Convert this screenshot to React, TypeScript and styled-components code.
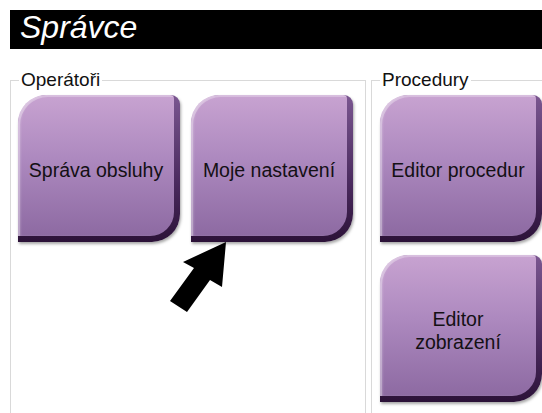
import React from "react";
import styled, { createGlobalStyle } from "styled-components";

const GlobalStyle = createGlobalStyle`
  html, body {
    margin: 0;
    padding: 0;
    background: #ffffff;
    overflow: hidden;
  }
`;

const Page = styled.div`
  position: relative;
  width: 542px;
  height: 413px;
  overflow: hidden;
  display: flex;
  flex-direction: column;
  font-family: "Liberation Sans", Arial, sans-serif;
  background: #ffffff;
`;

const Header = styled.div`
  margin: 10px 0 0 10px;
  height: 34px;
  padding: 0 0 5px 10px;
  background: #000000;
  color: #ffffff;
  font-size: 32px;
  font-style: italic;
  line-height: 34px;
`;

const Row = styled.div`
  flex: 1;
  display: flex;
  gap: 5px;
  margin: 21px 0 0 10px;
`;

const Group = styled.fieldset<{ $width: number }>`
  box-sizing: border-box;
  flex: none;
  width: ${({ $width }) => $width}px;
  margin: 0;
  padding: 5px 8px 0 8px;
  border: 1px solid #d9d9d9;
  border-bottom: none;
  min-width: 0;
`;

const Legend = styled.legend`
  padding: 0 2px;
  font-size: 19px;
  line-height: 20px;
  color: #111111;
`;

const TileRow = styled.div<{ $column?: boolean }>`
  display: flex;
  flex-direction: ${({ $column }) => ($column ? "column" : "row")};
  gap: ${({ $column }) => ($column ? "13px" : "11px")};
  margin-left: ${({ $column }) => ($column ? "0" : "-1px")};
`;

const Tile = styled.div`
  box-sizing: border-box;
  width: 162px;
  height: 147px;
  padding: 0 6px 6px 0;
  border-radius: 30px 9px 28px 0;
  background: linear-gradient(180deg, #7a5690 0%, #4a2a5e 60%, #2c1238 100%);
  box-shadow: 1px 2px 3px rgba(0, 0, 0, 0.35);
  display: flex;
`;

const Face = styled.div`
  flex: 1;
  display: flex;
  align-items: center;
  justify-content: center;
  text-align: center;
  border-radius: 28px 4px 24px 0;
  background: linear-gradient(180deg, #c8a3d1 0%, #ad89bf 45%, #8d6aa2 100%);
  box-shadow: inset 2px 2px 0 rgba(255, 255, 255, 0.28),
    inset 3px 0 2px rgba(255, 255, 255, 0.18);
  font-size: 19.5px;
  line-height: 23px;
  color: #141014;
  padding: 10px 4px 0 4px;
`;

const Arrow = styled.svg`
  position: absolute;
  left: 0;
  top: 0;
  pointer-events: none;
`;

const tiles = {
  operators: ["Správa obsluhy", "Moje nastavení"],
  procedures: ["Editor procedur", "Editor zobrazení"],
};

export default function App() {
  return (
    <>
      <GlobalStyle />
      <Page>
        <Header>Správce</Header>
        <Row>
          <Group $width={356}>
            <Legend>Operátoři</Legend>
            <TileRow>
              {tiles.operators.map((t) => (
                <Tile key={t}>
                  <Face>{t}</Face>
                </Tile>
              ))}
            </TileRow>
          </Group>
          <Group $width={190}>
            <Legend>Procedury</Legend>
            <TileRow $column>
              <Tile>
                <Face>Editor procedur</Face>
              </Tile>
              <Tile>
                <Face>
                  Editor
                  <br />
                  zobrazení
                </Face>
              </Tile>
            </TileRow>
          </Group>
        </Row>
        <Arrow width="542" height="413" viewBox="0 0 542 413">
          <polygon
            points="226,242 222,287 210,280 187,312 170,301 194,268 183,262"
            fill="#000000"
          />
        </Arrow>
      </Page>
    </>
  );
}
